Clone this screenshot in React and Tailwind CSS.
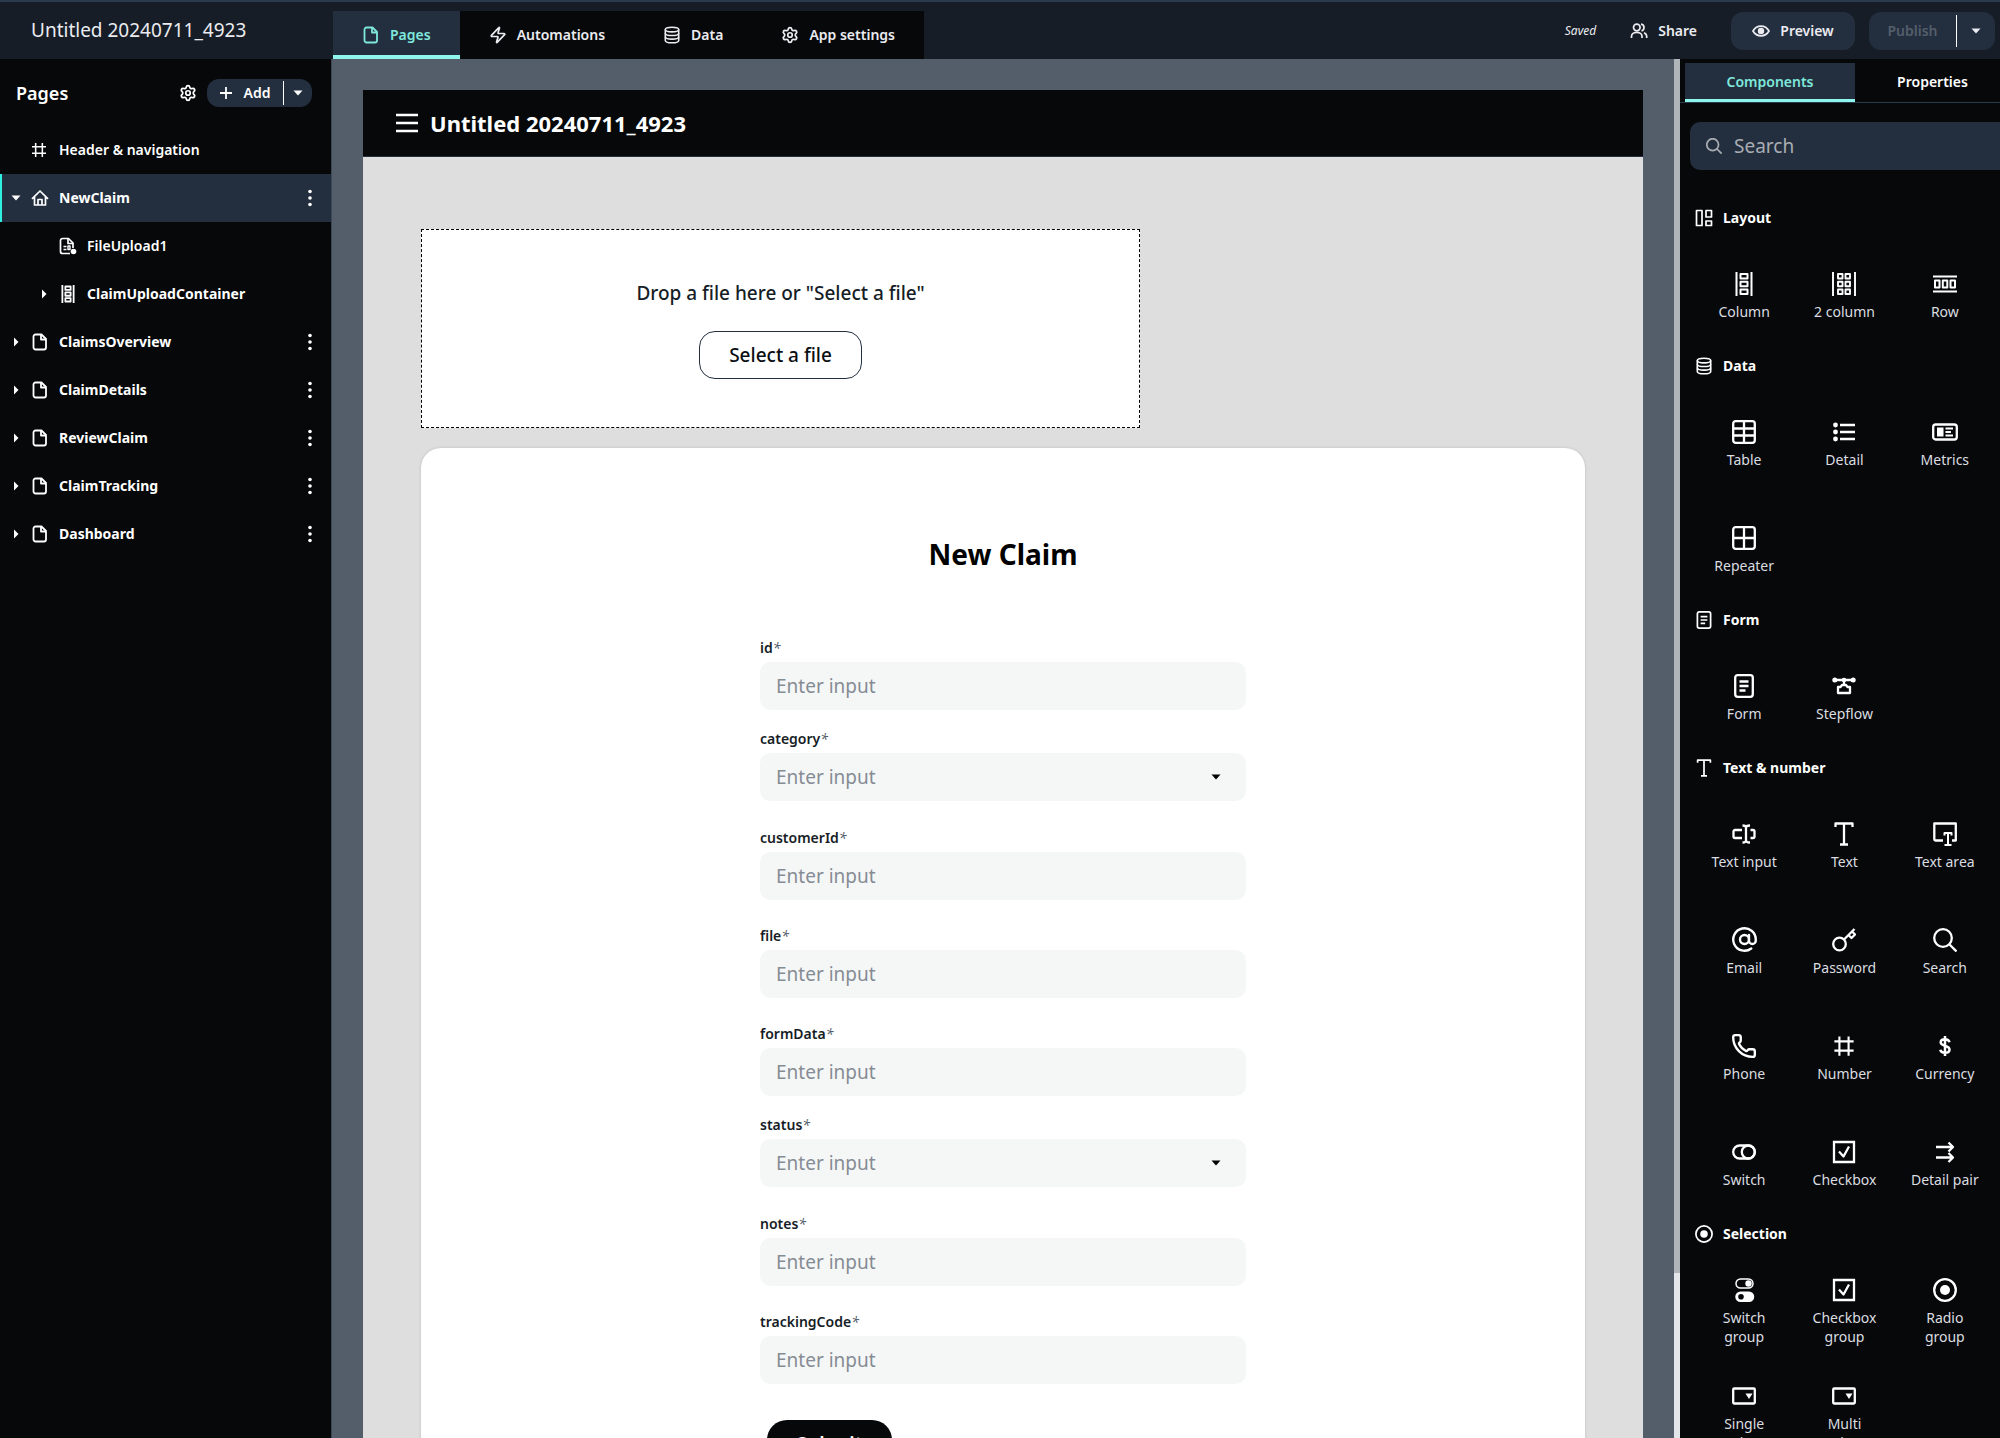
import { useState } from "react";
import { AtSign, Phone, Settings, Zap } from "lucide-react";

/* ICONS */
const Svg = ({ size = 24, box = 24, width = 2.3, children }) => (
  <svg
    width={size}
    height={size}
    viewBox={`0 0 ${box} ${box}`}
    fill="none"
    stroke="currentColor"
    strokeWidth={width}
    strokeLinejoin="round"
    className="shrink-0"
    aria-hidden="true"
  >
    {children}
  </svg>
);

const Caret = ({ dir = "down" }) => (
  <Svg size={10} box={10} width={0}>
    <path d={dir === "down" ? "M0.5 2.5h9L5 7.5z" : "M3 0.5v9L7.5 5z"} fill="currentColor" />
  </Svg>
);

const FileIcon = () => (
  <Svg size={18} box={18} width={1.8}>
    <path d="M4.5 1.5h6L15 6v8.5a2 2 0 0 1-2 2H4.5a2 2 0 0 1-2-2v-11a2 2 0 0 1 2-2z" />
    <path d="M10 1.5v5h5" />
  </Svg>
);

const DatabaseIcon = () => (
  <Svg size={18} box={18} width={1.6}>
    <ellipse cx="9" cy="3.6" rx="6.7" ry="2.3" />
    <path d="M2.3 3.6v10.8c0 1.3 3 2.300 6.700 2.300s6.700-1 6.700-2.300V3.600" />
    <path d="M2.300 7.200c0 1.300 3 2.300 6.700 2.300s6.700-1 6.700-2.300M2.300 10.800c0 1.300 3 2.300 6.700 2.300s6.700-1 6.700-2.300" />
  </Svg>
);

const HashIcon = ({ size = 24 }) => (
  <Svg size={size}>
    <path d="M7 1.5v21M17 1.5v21M1.5 7h21M1.5 17h21" />
  </Svg>
);

const HomeIcon = () => (
  <Svg size={18} box={18} width={1.7}>
    <path d="M1 9.8 9 2l8 7.8M3.5 8v8h11V8" />
    <path d="M7 16v-5.5h4V16" />
  </Svg>
);

const UploadIcon = () => (
  <Svg size={18} box={18} width={1.7}>
    <path d="M11 16.5H3.5a2 2 0 0 1-2-2v-11a2 2 0 0 1 2-2h6L14 6v5" />
    <path d="M9 1.5v5h5" />
    <path d="M4.5 9.5h3M4.5 12.5h3M9 9h2v3.5H9z" strokeWidth="1.4" />
    <circle cx="14.5" cy="14.5" r="2.8" fill="currentColor" stroke="none" />
  </Svg>
);

const UsersIcon = () => (
  <Svg size={18} box={18} width={1.7}>
    <circle cx="6.8" cy="5.5" r="3.3" />
    <path d="M1.5 16v-1.5c0-2.5 2-4 5.3-4s5.2 1.5 5.2 4V16M11 2.2c2 .2 3 1.6 3 3.3s-1 3-2.5 3.3M14 10.8c1.8.7 2.7 2 2.7 3.7V16" />
  </Svg>
);

const EyeIcon = () => (
  <Svg size={18} box={18} width={1.8}>
    <path d="M1 9c1.8-3 4.7-4.8 8-4.8s6.2 1.8 8 4.8c-1.8 3-4.7 4.8-8 4.8S2.8 12 1 9z" />
    <circle cx="9" cy="9" r="2.3" fill="currentColor" />
  </Svg>
);

const ColumnIcon = ({ size = 24, width = 2 }) => (
  <Svg size={size} width={width}>
    <path d="M4.5 0v24M19.5 0v24" />
    <path d="M8.5 2h7v4.5h-7zM8.5 9.8h7v4.5h-7zM8.5 17.5h7V22h-7z" />
  </Svg>
);

const TwoColumnIcon = () => (
  <Svg width={1.9}>
    <path d="M1 0v24M23 0v24" />
    <path d="M6 2h4.5v4.5H6zM6 9.8h4.5v4.5H6zM6 17.5h4.5V22H6zM13.5 2H18v4.5h-4.5zM13.5 9.8H18v4.5h-4.5zM13.5 17.5H18V22h-4.5z" />
  </Svg>
);

const RowIcon = () => (
  <Svg width={2}>
    <path d="M0 4.5h24M0 19.5h24" />
    <path d="M2 8.5h4.5v7H2zM9.8 8.5h4.5v7H9.8zM17.5 8.5H22v7h-4.5z" />
  </Svg>
);

const LayoutIcon = () => (
  <Svg size={18} box={18} width={1.7}>
    <path d="M1.5 1.5H7v15H1.500zM11 1.5h5.500V8H11zM11 12h5.500v4.500H11z" />
  </Svg>
);

const TableIcon = () => (
  <Svg>
    <rect x="1.2" y="1.2" width="21.6" height="21.6" rx="2.5" />
    <path d="M1 8.5h22M1 15.5h22M12 1v22" />
  </Svg>
);

const DetailIcon = () => (
  <Svg>
    <path d="M8 5h15M8 12h15M8 19h15" />
    <g fill="currentColor" stroke="none">
      <circle cx="3.5" cy="5" r="2.4" />
      <circle cx="3.5" cy="12" r="2.4" />
      <circle cx="3.5" cy="19" r="2.4" />
    </g>
  </Svg>
);

const MetricsIcon = () => (
  <Svg size={26} box={26}>
    <rect x="1.2" y="5.5" width="23.6" height="15" rx="2.5" />
    <path d="M5 8.5h6.5v9H5z" fill="currentColor" stroke="none" />
    <path d="M13.5 9.5H21M13.5 13h5.5M13.5 16.5H21" strokeWidth="2" />
  </Svg>
);

const RepeaterIcon = () => (
  <Svg>
    <rect x="1.2" y="1.2" width="21.6" height="21.6" rx="2.5" />
    <path d="M1 12h22M12 1v22" />
  </Svg>
);

const FormIcon = ({ size = 24 }) => (
  <Svg size={size}>
    <rect x="3.2" y="1.2" width="17.6" height="21.6" rx="2.5" />
    <path d="M7.5 7.5h9M7.5 12h9M7.5 16.5h6" />
  </Svg>
);

const StepflowIcon = () => (
  <Svg>
    <path d="M3 6h18M12 6v4M6 13h2.5l1.5-2h4l1.5 2H18v6H6z" />
    <g fill="currentColor" stroke="none">
      <circle cx="2.8" cy="6" r="2.5" />
      <circle cx="12" cy="6" r="2.3" />
      <circle cx="21.2" cy="6" r="2.5" />
    </g>
  </Svg>
);

const TypeIcon = ({ size = 24 }) => (
  <Svg size={size}>
    <path d="M3.5 5V1.5h17V5M12 1.5v21M8 22.5h8" />
  </Svg>
);

const TextInputIcon = () => (
  <Svg>
    <path d="M10 8H3a1.5 1.5 0 0 0-1.5 1.5v5A1.5 1.5 0 0 0 3 16h7M18.5 8H21a1.5 1.5 0 0 1 1.5 1.5v5A1.5 1.5 0 0 1 21 16h-2.5" />
    <path d="M10.5 3.5c2 0 3.5.5 3.5 2v13c0 1.5-1.5 2-3.5 2M18 3.5c-2 0-4 .5-4 2M18 20.5c-2 0-4-.5-4-2" />
  </Svg>
);

const TextAreaIcon = () => (
  <Svg>
    <path d="M10 18.5H2.5a1.2 1.2 0 0 1-1.2-1.2V1.5h21.5v17H19" />
    <path d="M11.5 13.5V11h7v2.5M15 11v12M11.5 23h7" strokeWidth="2" />
  </Svg>
);

const KeyIcon = () => (
  <Svg>
    <circle cx="7.5" cy="16" r="6.3" />
    <path d="M12 11.5 22.5 1M16.5 7l3 3L23 6.5l-3-3" />
  </Svg>
);

const SearchIcon = ({ size = 24, width = 2.3 }) => (
  <Svg size={size} width={width}>
    <circle cx="10" cy="10" r="8.8" />
    <path d="m16.5 16.5 7 7" />
  </Svg>
);

const DollarIcon = () => (
  <Svg width={2.5}>
    <path d="M16.5 8.2C16 6.3 14.3 5.3 12 5.3c-2.500 0-4.300 1.100-4.300 3.200 0 4 8.800 2.500 8.800 7 0 2.200-1.900 3.300-4.500 3.300-2.500 0-4.300-1-4.700-3M12 2v20" />
  </Svg>
);

const SwitchIcon = () => (
  <Svg>
    <rect x="1.2" y="5.5" width="21.6" height="13" rx="6.5" />
    <circle cx="16.3" cy="12" r="6.5" />
  </Svg>
);

const CheckboxIcon = () => (
  <Svg>
    <path d="M2 2h20v20H2z" strokeLinejoin="miter" />
    <path d="m7 11.5 4.5 5L17 6.5" />
  </Svg>
);

const DetailPairIcon = () => (
  <Svg>
    <path d="M3 7h17M3 17.5h17M15.5 2.5 20 7l-4.5 4.5M15.5 13l4.5 4.5-4.5 4.5" />
  </Svg>
);

const RadioIcon = ({ size = 24 }) => (
  <Svg size={size}>
    <circle cx="12" cy="12" r="10.8" />
    <circle cx="12" cy="12" r="5" fill="currentColor" stroke="none" />
  </Svg>
);

const SwitchGroupIcon = () => (
  <Svg>
    <rect x="4" y="1" width="17" height="9" rx="4.5" strokeWidth="1.5" />
    <circle cx="16.5" cy="5.5" r="3.2" fill="currentColor" stroke="none" />
    <path
      d="M8.5 13.5H17A5 5 0 0 1 17 24H8.5a5 5 0 0 1 0-10.500zm.5 2.5a2.800 2.800 0 1 0 0 5.600A2.800 2.800 0 0 0 9 16z"
      fill="currentColor"
      fillRule="evenodd"
      stroke="none"
    />
  </Svg>
);

const SelectIcon = () => (
  <Svg>
    <rect x="1.2" y="4.5" width="21.6" height="15" rx="1" />
    <path d="M13.5 9.500H20.500l-3.500 5.500z" fill="currentColor" stroke="none" />
  </Svg>
);

const DotsIcon = () => (
  <Svg size={18} box={18} width={0}>
    <g fill="currentColor">
      <circle cx="9" cy="2.5" r="1.8" />
      <circle cx="9" cy="9" r="1.8" />
      <circle cx="9" cy="15.5" r="1.8" />
    </g>
  </Svg>
);

/* DATA */
const tabs = [
  { label: "Pages", icon: <FileIcon /> },
  { label: "Automations", icon: <Zap size={18} strokeWidth={2.3} /> },
  { label: "Data", icon: <DatabaseIcon /> },
  { label: "App settings", icon: <Settings size={18} strokeWidth={2.3} /> },
];

const pages = ["ClaimsOverview", "ClaimDetails", "ReviewClaim", "ClaimTracking", "Dashboard"];

const fields = [
  { name: "id" },
  { name: "category", select: true },
  { name: "customerId" },
  { name: "file" },
  { name: "formData" },
  { name: "status", select: true },
  { name: "notes" },
  { name: "trackingCode" },
];

const sections = [
  {
    title: "Layout",
    icon: <LayoutIcon />,
    items: [
      { label: "Column", icon: <ColumnIcon /> },
      { label: "2 column", icon: <TwoColumnIcon /> },
      { label: "Row", icon: <RowIcon /> },
    ],
  },
  {
    title: "Data",
    icon: <DatabaseIcon />,
    items: [
      { label: "Table", icon: <TableIcon /> },
      { label: "Detail", icon: <DetailIcon /> },
      { label: "Metrics", icon: <MetricsIcon /> },
      { label: "Repeater", icon: <RepeaterIcon /> },
    ],
  },
  {
    title: "Form",
    icon: <FormIcon size={18} />,
    items: [
      { label: "Form", icon: <FormIcon /> },
      { label: "Stepflow", icon: <StepflowIcon /> },
    ],
  },
  {
    title: "Text & number",
    icon: <TypeIcon size={18} />,
    items: [
      { label: "Text input", icon: <TextInputIcon /> },
      { label: "Text", icon: <TypeIcon /> },
      { label: "Text area", icon: <TextAreaIcon /> },
      { label: "Email", icon: <AtSign size={27} strokeWidth={2.1} /> },
      { label: "Password", icon: <KeyIcon /> },
      { label: "Search", icon: <SearchIcon /> },
      { label: "Phone", icon: <Phone size={26} strokeWidth={2.2} /> },
      { label: "Number", icon: <HashIcon size={22} /> },
      { label: "Currency", icon: <DollarIcon /> },
      { label: "Switch", icon: <SwitchIcon /> },
      { label: "Checkbox", icon: <CheckboxIcon /> },
      { label: "Detail pair", icon: <DetailPairIcon /> },
    ],
  },
  {
    title: "Selection",
    icon: <RadioIcon size={18} />,
    items: [
      { label: "Switch group", icon: <SwitchGroupIcon /> },
      { label: "Checkbox group", icon: <CheckboxIcon /> },
      { label: "Radio group", icon: <RadioIcon /> },
      { label: "Single select", icon: <SelectIcon /> },
      { label: "Multi select", icon: <SelectIcon /> },
    ],
  },
];

/* TOP BAR */
const TopBar = () => {
  const [active, setActive] = useState("Pages");

  return (
    <header className="flex h-[59px] shrink-0 border-t-2 border-[#2b3b4f] bg-[#161d26]">
      <div className="flex w-[333px] shrink-0 items-center pl-[31px] text-[19px] text-[#ebebf0]">
        Untitled 20240711_4923
      </div>

      <nav className="flex h-12 shrink-0 self-end bg-[#06080a]">
        {tabs.map((tab) => (
          <button
            key={tab.label}
            onClick={() => setActive(tab.label)}
            className={`flex items-center gap-2.5 border-b-4 px-[29px] pt-1 text-sm font-semibold ${
              active === tab.label
                ? "border-[#8ff6ee] bg-[#232f3f] text-[#7fe8dc]"
                : "border-transparent text-[#ebebf0]"
            }`}
          >
            {tab.icon}
            {tab.label}
          </button>
        ))}
      </nav>

      <div className="ml-auto flex items-center pr-[5px] text-sm font-semibold text-[#ebebf0]">
        <span className="text-xs font-normal italic">Saved</span>
        <button className="ml-[34px] flex items-center gap-2.5">
          <UsersIcon />
          Share
        </button>
        <button className="ml-[34px] flex h-[38px] w-[124px] items-center justify-center gap-2.5 rounded-xl bg-[#232f3f]">
          <EyeIcon />
          Preview
        </button>
        <div className="ml-3.5 flex h-[38px] items-center rounded-xl bg-[#232f3f]">
          <button className="w-[87px] text-center text-[#545e6b]" disabled>
            Publish
          </button>
          <span className="h-8 w-px bg-white" />
          <button className="flex w-[38px] justify-center" aria-label="Publish options">
            <Caret />
          </button>
        </div>
      </div>
    </header>
  );
};

/* SIDEBAR */
const TreeRow = ({ label, icon, caret, nested, selected, menu }) => (
  <li
    className={`flex h-12 items-center border-l-2 pr-3 text-sm ${
      selected ? "border-[#2ff0e0] bg-[#232f3f]" : "border-transparent"
    } ${nested ? "pl-[37px]" : "pl-[9px]"} ${caret ? "font-bold" : "font-semibold"}`}
  >
    <span className="flex w-5">{caret && <Caret dir={caret} />}</span>
    <span className="flex w-7">{icon}</span>
    <span className="flex-1">{label}</span>
    {menu && (
      <button aria-label={`${label} menu`}>
        <DotsIcon />
      </button>
    )}
  </li>
);

const Sidebar = () => (
  <aside className="w-[332px] shrink-0 border-r border-[#3d4856] bg-[#06080a] text-white">
    <div className="flex h-[67px] items-center pr-[19px] pl-4">
      <h2 className="flex-1 text-lg font-semibold">Pages</h2>
      <button aria-label="Page settings" className="mr-2.5">
        <Settings size={18} strokeWidth={2.3} />
      </button>
      <div className="flex h-7 items-center rounded-xl bg-[#232f3f] text-sm font-semibold">
        <button className="flex w-[76px] items-center justify-center gap-3">
          <Svg size={12} box={12} width={1.8}>
            <path d="M6 0v12M0 6h12" />
          </Svg>
          Add
        </button>
        <span className="h-6 w-px bg-white" />
        <button className="flex w-7 justify-center" aria-label="Add options">
          <Caret />
        </button>
      </div>
    </div>
    <ul>
      <TreeRow label="Header & navigation" icon={<HashIcon size={16} />} />
      <TreeRow label="NewClaim" icon={<HomeIcon />} caret="down" selected menu />
      <TreeRow label="FileUpload1" icon={<UploadIcon />} nested />
      <TreeRow
        label="ClaimUploadContainer"
        icon={<ColumnIcon size={18} width={2.4} />}
        caret="right"
        nested
      />
      {pages.map((page) => (
        <TreeRow key={page} label={page} icon={<FileIcon />} caret="right" menu />
      ))}
    </ul>
  </aside>
);

/* CANVAS */
const Field = ({ name, select }) => (
  <div className={select ? "pt-[18px] pb-px" : "pt-[25px]"}>
    <label htmlFor={name} className="mb-1 block pt-px text-sm leading-5 font-semibold text-[#161d26]">
      {name}
      <span className="font-normal text-[#545e6b] italic">*</span>
    </label>
    {select ? (
      <div className="relative">
        <select
          id={name}
          defaultValue=""
          className="block h-12 w-full appearance-none rounded-[10px] bg-[#f5f7f7] px-4 text-[19px] text-[#868c94]"
        >
          <option value="">Enter input</option>
        </select>
        <span className="pointer-events-none absolute top-[19px] right-[25px] text-black">
          <Caret />
        </span>
      </div>
    ) : (
      <input
        id={name}
        type="text"
        placeholder="Enter input"
        className="block h-12 w-full rounded-[10px] bg-[#f5f7f7] px-4 text-[19px] placeholder-[#868c94]"
      />
    )}
  </div>
);

const Canvas = () => (
  <main className="flex-1 overflow-hidden bg-[#545e6a] px-[31px] pt-[31px]">
    <div className="flex h-[67px] items-center gap-3 border-b border-[#232f3f] bg-[#06080a] px-[33px] text-white">
      <button aria-label="Menu">
        <Svg size={22} box={22} width={2.4}>
          <path d="M0 3h22M0 11h22M0 19h22" />
        </Svg>
      </button>
      <h1 className="text-[22px] font-bold">Untitled 20240711_4923</h1>
    </div>

    <div className="bg-[#dedede] px-[58px] pt-[72px]">
      <div className="flex h-[199px] w-[719px] flex-col items-center border border-dashed border-black bg-white pt-[49px]">
        <p className="text-[19px] leading-7 font-medium text-[#161d26]">
          Drop a file here or "Select a file"
        </p>
        <button className="mt-6 h-12 w-[163px] rounded-2xl border border-[#232f3f] text-[19px] font-medium text-[#0b0e12]">
          Select a file
        </button>
      </div>

      <div className="mt-5 rounded-[20px] bg-white pt-[86px] pb-16 shadow-[0_0_3px_rgba(0,0,0,0.15)]">
        <h2 className="text-center text-[28px] leading-10 font-bold text-black">New Claim</h2>
        <form className="mx-auto mt-[38px] w-[486px]" onSubmit={(e) => e.preventDefault()}>
          {fields.map((field) => (
            <Field key={field.name} {...field} />
          ))}
          <button className="mt-9 ml-[7px] h-[49px] w-[125px] rounded-[20px] bg-[#06080a] text-[19px] font-semibold text-white">
            Submit
          </button>
        </form>
      </div>
    </div>
  </main>
);

/* COMPONENTS PANEL */
const Panel = () => {
  const [active, setActive] = useState("Components");

  return (
    <aside className="w-80 shrink-0 overflow-hidden bg-[#06080a] text-white">
      <div className="w-[330px]">
        <div className="flex h-11 border-b border-[#2b3b4f] pt-1 pl-[5px]">
          {["Components", "Properties"].map((tab) => (
            <button
              key={tab}
              onClick={() => setActive(tab)}
              className={`border-b-[3px] pt-0.5 text-sm font-semibold ${
                active === tab
                  ? "w-[170px] border-[#8ff6ee] bg-[#232f3f] text-[#7fe8dc]"
                  : "flex-1 border-transparent"
              }`}
            >
              {tab}
            </button>
          ))}
        </div>

        <label className="mt-[19px] ml-2.5 flex h-12 items-center gap-3 rounded-[10px] bg-[#232f3f] pl-4 text-[#a9adb3]">
          <SearchIcon size={16} width={2.6} />
          <input
            type="text"
            placeholder="Search"
            aria-label="Search components"
            className="w-full bg-transparent text-[19px] placeholder-[#a9adb3] outline-none"
          />
        </label>

        <div className="mt-[31px] w-[315px] pl-3.5">
          {sections.map((section) => (
            <section key={section.title}>
              <h3 className="mb-2 flex h-[34px] items-center gap-2.5 pl-px text-sm font-bold">
                {section.icon}
                {section.title}
              </h3>
              <div className="grid grid-cols-3">
                {section.items.map((item) => (
                  <button
                    key={item.label}
                    className="flex h-[106px] flex-col items-center justify-center gap-1.5 px-3.5 text-sm leading-[19px] text-[#dcdde0]"
                  >
                    <span className="flex h-6 items-center text-white">{item.icon}</span>
                    {item.label}
                  </button>
                ))}
              </div>
            </section>
          ))}
        </div>
      </div>
    </aside>
  );
};

const App = () => (
  <div className="flex h-screen flex-col overflow-hidden font-['Noto_Sans',sans-serif]">
    <TopBar />
    <div className="flex min-h-0 flex-1">
      <Sidebar />
      <Canvas />
      {/* SCROLLBAR */}
      <div className="w-1.5 shrink-0 bg-[#e3e6e8]">
        <div className="h-[88%] bg-[#b0b5b9]" />
      </div>
      <Panel />
    </div>
  </div>
);

export default App;
